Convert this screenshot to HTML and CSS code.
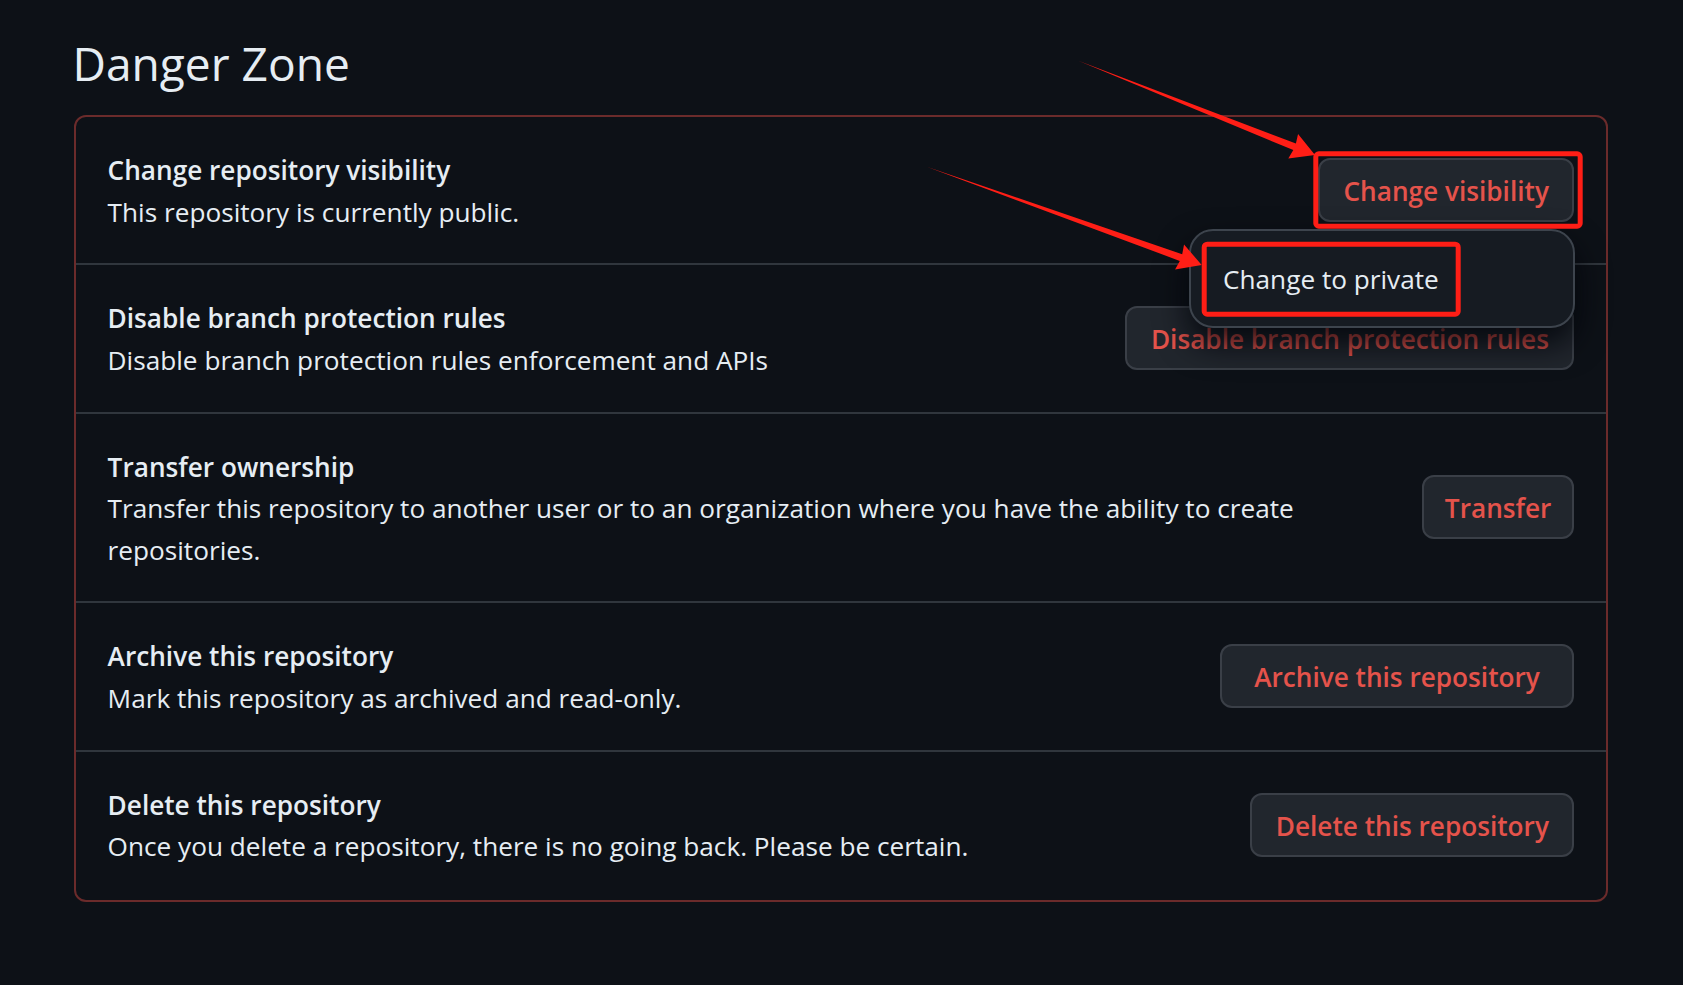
FILE: index.html
```html
<!DOCTYPE html>
<html lang="en">
<head>
<meta charset="utf-8">
<title>Danger Zone</title>
<link rel="stylesheet" href="styles.css">
</head>
<body>
<div class="page">
  <h2 class="zone-title">Danger Zone</h2>
  <div class="danger-box">
    <div class="row">
      <div class="row-text">
        <div class="row-title">Change repository visibility</div>
        <div class="row-desc">This repository is currently public.</div>
      </div>
      <div class="action">
        <div class="btn-danger">Change visibility</div>
        <div class="menu">
          <div class="menu-item">Change to private</div>
        </div>
      </div>
    </div>
    <div class="row">
      <div class="row-text">
        <div class="row-title">Disable branch protection rules</div>
        <div class="row-desc">Disable branch protection rules enforcement and APIs</div>
      </div>
      <div class="action">
        <div class="btn-danger">Disable branch protection rules</div>
      </div>
    </div>
    <div class="row">
      <div class="row-text">
        <div class="row-title">Transfer ownership</div>
        <div class="row-desc">Transfer this repository to another user or to an organization where you have the ability to create repositories.</div>
      </div>
      <div class="action">
        <div class="btn-danger btn-narrow">Transfer</div>
      </div>
    </div>
    <div class="row">
      <div class="row-text">
        <div class="row-title">Archive this repository</div>
        <div class="row-desc">Mark this repository as archived and read-only.</div>
      </div>
      <div class="action">
        <div class="btn-danger btn-wide">Archive this repository</div>
      </div>
    </div>
    <div class="row">
      <div class="row-text">
        <div class="row-title">Delete this repository</div>
        <div class="row-desc">Once you delete a repository, there is no going back. Please be certain.</div>
      </div>
      <div class="action">
        <div class="btn-danger">Delete this repository</div>
      </div>
    </div>
  </div>
</div>
<svg class="annotations" width="1683" height="985" viewBox="0 0 1683 985">
  <rect class="mark" x="1315.8" y="153.8" width="264.4" height="72.4" rx="3"/>
  <rect class="mark" x="1204.2" y="244.2" width="254" height="70" rx="3"/>
  <polygon class="arrow" points="1078.3,60.7 1295.9,143.6 1298.05,134.04 1315,155 1288.29,158.56 1293.3,150.1"/>
  <polygon class="arrow" points="926.7,166.7 1182.2,254.3 1184.05,244.57 1201.7,265 1175.09,269.61 1179.8,260.9"/>
</svg>
</body>
</html>
```
FILE: styles.css
```css
* {
  box-sizing: border-box;
}

html,
body {
  margin: 0;
  background: #0d1117;
}

body {
  position: relative;
  width: 1683px;
  height: 985px;
  overflow: hidden;
  font-family: "Open Sans", "Noto Sans", sans-serif;
  font-size: 26.2px;
  line-height: 41.4px;
  color: #e6edf3;
}

.page {
  padding: 30.2px 75px 0 74px;
}

.zone-title {
  margin: 0 0 17.4px -1.5px;
  font-size: 46.1px;
  line-height: 67.4px;
  font-weight: 400;
  color: #e6edf3;
}

.danger-box {
  border: 2px solid #6b2b2b;
  border-radius: 12px;
}

.row {
  display: flex;
  align-items: center;
  gap: 24px;
  padding: 33.2px 31.6px 30.3px;
  border-top: 2px solid #30363d;
}

.row:first-child {
  border-top: 0;
}

.row:last-child {
  padding-bottom: 32.3px;
}

.row-text {
  flex: 1;
  min-width: 0;
}

.row-title {
  font-weight: 600;
}

.action {
  position: relative;
  flex: none;
  margin-top: -2.9px;
}

.btn-danger {
  display: flex;
  align-items: center;
  height: 64px;
  padding: 3px 23.5px 0;
  border: 2px solid #3a3f47;
  border-radius: 12px;
  background: #21262d;
  color: #e5534b;
  font-weight: 600;
  white-space: nowrap;
}

.btn-wide {
  padding-left: 32.6px;
  padding-right: 32.6px;
}

.btn-narrow {
  padding-left: 21px;
  padding-right: 21px;
}

.menu {
  position: absolute;
  top: calc(100% + 7px);
  right: -1px;
  z-index: 2;
  width: 386px;
  padding: 15.8px;
  background: #161b22;
  border: 2px solid #3d444d;
  border-radius: 24px;
  box-shadow: 0 16px 32px rgba(1, 4, 9, 0.85);
}

.menu-item {
  display: flex;
  align-items: center;
  height: 63px;
  padding: 3px 15.8px 0;
  color: #e6edf3;
  white-space: nowrap;
}

.annotations {
  position: absolute;
  top: 0;
  left: 0;
  z-index: 5;
  pointer-events: none;
}

.mark {
  fill: none;
  stroke: #ff1e16;
  stroke-width: 5;
}

.arrow {
  fill: #ff1e16;
}
```
